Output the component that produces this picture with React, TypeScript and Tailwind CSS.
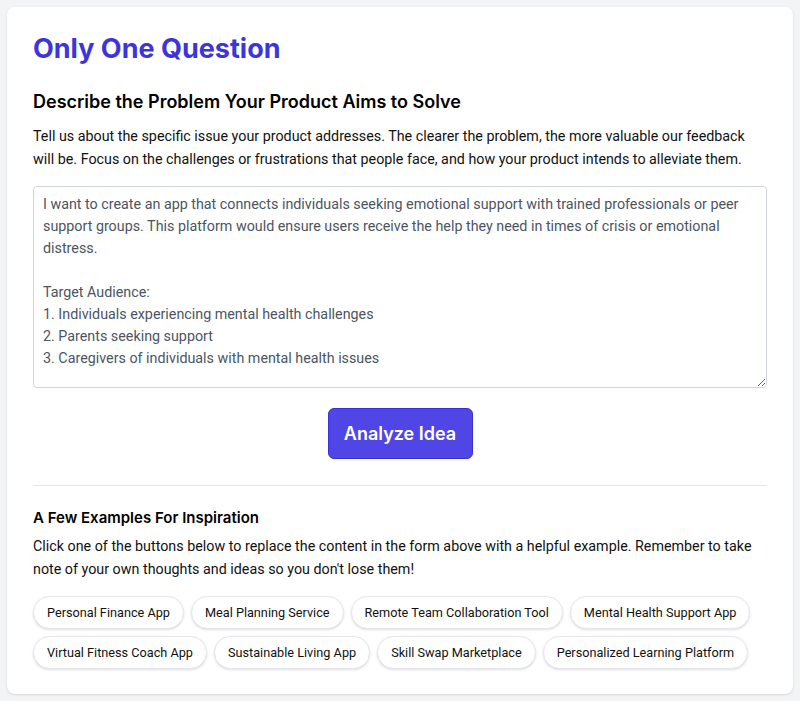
import React from 'react';

const examples = [
  'Personal Finance App',
  'Meal Planning Service',
  'Remote Team Collaboration Tool',
  'Mental Health Support App',
  'Virtual Fitness Coach App',
  'Sustainable Living App',
  'Skill Swap Marketplace',
  'Personalized Learning Platform',
];

const initialText = `I want to create an app that connects individuals seeking emotional support with trained professionals or peer support groups. This platform would ensure users receive the help they need in times of crisis or emotional distress.

Target Audience:
1. Individuals experiencing mental health challenges
2. Parents seeking support
3. Caregivers of individuals with mental health issues`;

const App: React.FC = () => {
  return (
    <div className="min-h-[701px] bg-[#f3f4f6] p-[7px] font-['Roboto',sans-serif] text-black">
      <div className="bg-white rounded-lg shadow px-[26px] pt-[24px] pb-[25px]">
        <h1 className="font-['Inter',sans-serif] text-[27px] leading-[36px] font-bold text-[#3b35db]">Only One Question</h1>

        <h2 className="font-['Inter',sans-serif] mt-[21px] text-[18px] leading-7 font-semibold">
          Describe the Problem Your Product Aims to Solve
        </h2>
        <p className="mt-[9px] text-[14.3px] leading-[23px] text-[#111]">
          Tell us about the specific issue your product addresses. The clearer the problem, the more valuable our feedback
          will be. Focus on the challenges or frustrations that people face, and how your product intends to alleviate them.
        </p>

        <textarea
          className="mt-[15px] block w-full h-[202px] border border-gray-300 rounded px-[9px] py-[6px] text-[14.3px] leading-[22px] text-[#4b5563] resize-y outline-none"
          defaultValue={initialText}
        />

        <div className="flex justify-center mt-[20px]">
          <button className="font-['Inter',sans-serif] w-[145px] h-[51px] bg-[#4f46e5] border border-[#3730d8] rounded-md text-white text-[18px] font-semibold">
            Analyze Idea
          </button>
        </div>

        <hr className="mt-[26px] border-gray-200" />

        <h3 className="font-['Inter',sans-serif] mt-[20px] text-[15px] leading-6 font-semibold">A Few Examples For Inspiration</h3>
        <p className="mt-[5px] text-[14.3px] leading-[23px] text-[#111]">
          Click one of the buttons below to replace the content in the form above with a helpful example. Remember to take
          note of your own thoughts and ideas so you don't lose them!
        </p>

        <div className="mt-[15px] flex flex-wrap gap-x-[7px] gap-y-[7px]">
          {examples.map((e) => (
            <button
              key={e}
              className="h-[33px] px-[13px] rounded-full border border-gray-200 shadow-sm bg-white text-[12.7px] text-[#111]"
            >
              {e}
            </button>
          ))}
        </div>
      </div>
    </div>
  );
};

export default App;
